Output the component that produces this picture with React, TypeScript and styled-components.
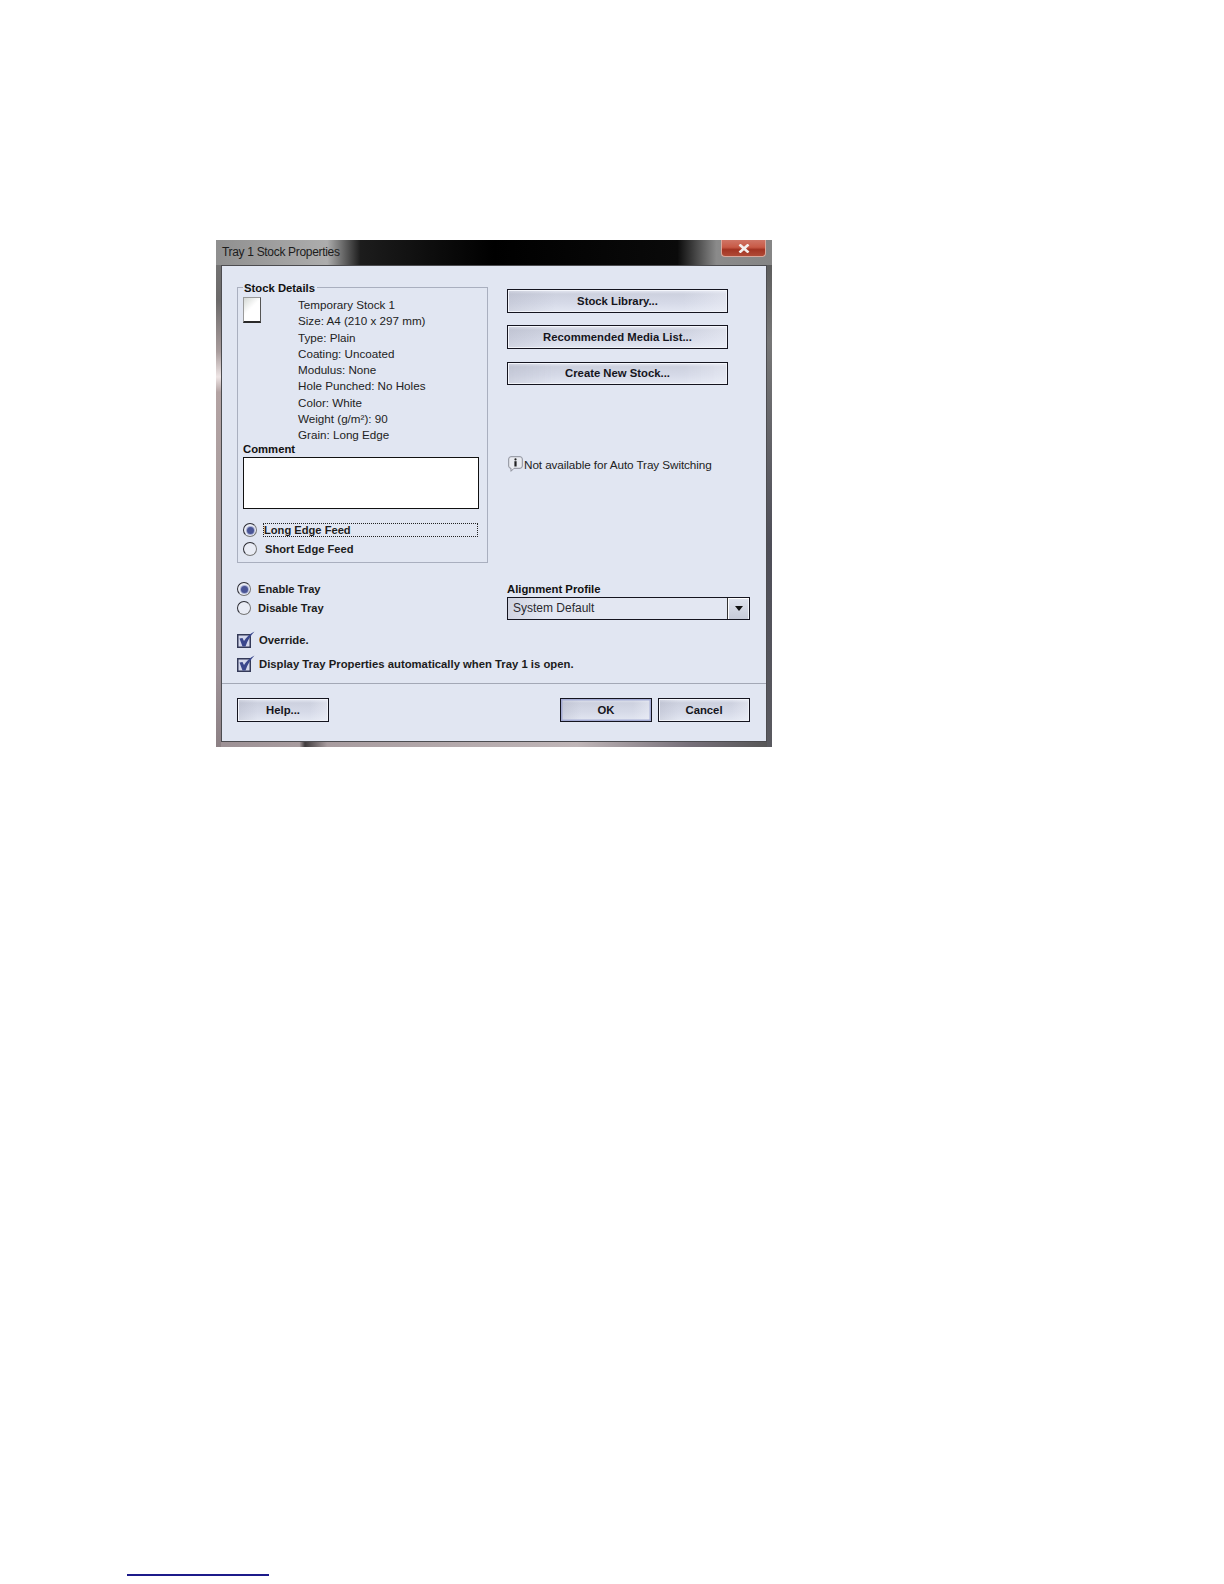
import { createGlobalStyle, styled } from "styled-components";

const GlobalStyle = createGlobalStyle`
  html, body {
    margin: 0;
    padding: 0;
    background: #fff;
  }
  * {
    box-sizing: border-box;
  }
`;

const Page = styled.div`
  width: 1224px;
  height: 1584px;
  padding: 240px 0 0 216px;
  font-family: "Liberation Sans", Arial, sans-serif;
  font-size: 11.65px;
  color: #1a1a1a;
`;

const Dialog = styled.div`
  position: relative;
  width: 556px;
  height: 507px;
  padding: 0 5px 5px;
  display: flex;
  flex-direction: column;
  background:
    linear-gradient(90deg, #8f8f8f 0, #adadad 20%, #1c1c1c 26%, #000 50%, #0a0a0a 83%, #8a8a8a 90%, #858585 100%) top / 100% 25px no-repeat,
    linear-gradient(180deg, #777 0, #6c6a6a 12%, #a89c9c 22%, #eee5e5 27%, #b3a3a3 30%, #a59a9c 60%, #9f9398 85%, #8c8084 100%) left / 5px 100% no-repeat,
    linear-gradient(180deg, #555 0, #777 20%, #4e4e58 60%, #5a5a60 100%) right / 5px 100% no-repeat,
    linear-gradient(90deg, #9c9094 0, #a89c9f 15%, #3f3b3d 16%, #a89c9f 20%, #c0b6b8 65%, #77707a 85%, #555 100%);
`;

const TitleBar = styled.div`
  height: 25px;
  flex: none;
  display: flex;
  align-items: center;
  padding: 0 0 2px 1px;
  font-size: 12px;
  letter-spacing: -0.32px;
  color: #1c1c1c;
`;

const CloseButton = styled.div`
  position: absolute;
  top: 0;
  right: 6px;
  width: 45px;
  height: 17px;
  display: flex;
  align-items: center;
  justify-content: center;
  border: 1px solid #d9a89c;
  border-top: none;
  border-radius: 0 0 4px 4px;
  background: linear-gradient(180deg, #cf7566 0, #c85a46 45%, #a23322 60%, #b04a36 100%);
`;

const Client = styled.div`
  width: 546px;
  height: 477px;
  flex: none;
  display: flex;
  flex-direction: column;
  border: 1px solid #4c4c50;
  background: #e1e6f2;
`;

const Body = styled.div`
  padding: 21px 15px 0;
`;

const TopRow = styled.div`
  display: flex;
  align-items: flex-start;
`;

const GroupBox = styled.div`
  position: relative;
  width: 251px;
  height: 276px;
  padding: 9px 0 0 5px;
  border: 1px solid #a9afbf;
`;

const GroupLegend = styled.span`
  position: absolute;
  top: -7px;
  left: 5px;
  padding: 0 2px 0 1px;
  background: #e1e6f2;
  font-weight: bold;
  font-size: 11.3px;
  line-height: 14px;
  color: #111;
`;

const DetailsRow = styled.div`
  display: flex;
  align-items: flex-start;
`;

const StockIcon = styled.div`
  width: 18px;
  height: 26px;
  flex: none;
  border: 1px solid #9a9a9a;
  border-right-color: #555;
  border-bottom: 2px solid #2a2a2a;
  background: linear-gradient(135deg, #d5d9d5 0, #fff 45%, #fff 100%);
`;

const DetailLines = styled.div`
  margin-left: 37px;
`;

const DetailLine = styled.div`
  height: 16.25px;
  line-height: 16px;
  white-space: nowrap;
  color: #222;
`;

const FieldLabel = styled.div`
  height: 15px;
  line-height: 14px;
  font-weight: bold;
  font-size: 11.3px;
  color: #111;
  white-space: nowrap;
`;

const CommentLabel = styled(FieldLabel)`
  margin-top: -1px;
`;

const CommentBox = styled.div`
  width: 236px;
  height: 52px;
  margin-bottom: 14px;
  border: 1.5px solid #111;
  background: #fff;
`;

const RadioList = styled.div`
  display: flex;
  flex-direction: column;
  gap: 5px;
`;

const RadioRow = styled.div<{ $gap: number }>`
  display: flex;
  align-items: center;
  gap: ${({ $gap }) => $gap}px;
  height: 14px;
  font-weight: bold;
  font-size: 11.15px;
  color: #1c1c1c;
  white-space: nowrap;
`;

const RadioDot = styled.span<{ $checked?: boolean }>`
  width: 14px;
  height: 14px;
  flex: none;
  display: flex;
  align-items: center;
  justify-content: center;
  border-radius: 50%;
  border: 1.5px solid #2c2c34;
  border-bottom-color: #777;
  border-right-color: #777;
  background: #e9ecf5;

  &::after {
    content: "";
    display: ${({ $checked }) => ($checked ? "block" : "none")};
    width: 7px;
    height: 7px;
    border-radius: 50%;
    background: #4a5596;
    box-shadow: 0 0 0 1px #a9b0d3;
  }
`;

const FocusLabel = styled.span`
  width: 215px;
  height: 14px;
  line-height: 12px;
  border: 1px dotted #222;
`;

const RightColumn = styled.div`
  width: 221px;
  margin-left: 19px;
  padding-top: 2px;
`;

const ActionStack = styled.div`
  display: flex;
  flex-direction: column;
  gap: 12.8px;
`;

const Button = styled.div<{ $width?: number; $default?: boolean }>`
  width: ${({ $width }) => ($width ? `${$width}px` : "100%")};
  height: 23.5px;
  display: flex;
  align-items: center;
  justify-content: center;
  border: 1px solid #14141f;
  border-bottom-width: 1.5px;
  box-shadow: ${({ $default }) =>
    $default
      ? "inset 0 0 0 1.5px #a4abd4"
      : "inset 1px 1px 0 #f3f5fb, inset -1px -1px 0 #f0f2f8"};
  background:
    linear-gradient(90deg, rgba(150, 153, 170, 0.22) 0, rgba(255, 255, 255, 0) 22%, rgba(255, 255, 255, 0) 80%, rgba(240, 242, 250, 0.5) 100%),
    linear-gradient(180deg, #e6e9f3 0, #cdd1df 18%, #d6dae8 60%, #e3e7f2 100%);
  font-weight: bold;
  font-size: 11.3px;
  color: #15151c;
`;

const NoteRow = styled.div`
  display: flex;
  align-items: center;
  gap: 1px;
  height: 16px;
  margin-top: 71px;
  padding-left: 1px;
  font-size: 11.75px;
  letter-spacing: -0.1px;
  color: #222;
  white-space: nowrap;
`;

const MiddleRow = styled.div`
  display: flex;
  align-items: flex-start;
  margin-top: 19px;
`;

const TrayColumn = styled.div`
  width: 270px;
`;

const ProfileColumn = styled.div`
  width: 243px;
`;

const Combo = styled.div`
  height: 23px;
  display: flex;
  align-items: stretch;
  border: 1px solid #14141f;
  background: linear-gradient(90deg, #d0d3e0 0, #e3e7f2 15%, #e3e7f2 100%);
`;

const ComboText = styled.span`
  flex: 1;
  padding-left: 5px;
  font-size: 12px;
  line-height: 21px;
  color: #2a2a30;
`;

const ComboArrow = styled.span`
  width: 22px;
  display: flex;
  align-items: center;
  justify-content: center;
  border-left: 1px solid #333;
  box-shadow: inset 1px 1px 0 #fff, inset -1px 0 0 #f0f2f8;
  background: linear-gradient(180deg, #dfe3ee 0, #c6cad8 100%);

  &::after {
    content: "";
    width: 0;
    height: 0;
    border-left: 4.5px solid transparent;
    border-right: 4.5px solid transparent;
    border-top: 5px solid #111;
  }
`;

const CheckList = styled.div`
  display: flex;
  flex-direction: column;
  gap: 8px;
  margin-top: 12px;
`;

const CheckRow = styled.div`
  display: flex;
  align-items: center;
  gap: 4px;
  height: 16px;
  font-weight: bold;
  font-size: 11.3px;
  color: #1c1c1c;
  white-space: nowrap;
`;

const Divider = styled.div`
  height: 1px;
  margin-top: 11px;
  background: #a3a8b6;
`;

const Footer = styled.div`
  display: flex;
  justify-content: space-between;
  padding: 14px 16px 0 15px;
`;

const FooterActions = styled.div`
  display: flex;
  gap: 6px;
`;

const FootnoteRule = styled.div`
  width: 142px;
  height: 2px;
  margin: 827px 0 0 -89px;
  background: #1c1a8a;
`;

const CheckIcon = () => (
  <svg width="18" height="18" viewBox="0 0 18 18" style={{ flex: "none", marginTop: -1 }}>
    <rect x="0.75" y="3.75" width="12.5" height="12.5" fill="#d3d7ec" stroke="#343a58" strokeWidth="1.5" />
    <path d="M2.5 7.5 L5.5 7 L7 10 C9 6.5 12.5 3 17.5 0.5 C14 4 10.5 9.5 8.5 15.5 L5.5 15.5 Z" fill="#39468c" />
  </svg>
);

const InfoIcon = () => (
  <svg width="15" height="16" viewBox="0 0 15 16" style={{ flex: "none" }}>
    <path
      d="M3 0.7 H12 A2.3 2.3 0 0 1 14.3 3 V10 A2.3 2.3 0 0 1 12 12.3 H6 L3 15.3 V12.3 A2.3 2.3 0 0 1 0.7 10 V3 A2.3 2.3 0 0 1 3 0.7 Z"
      fill="#e9ebf1"
      stroke="#8b8e98"
    />
    <circle cx="7.5" cy="3.4" r="1.1" fill="#222" />
    <rect x="6.4" y="5.2" width="2.2" height="5.3" fill="#222" />
  </svg>
);

const CloseGlyph = () => (
  <svg width="12" height="9" viewBox="0 0 12 9">
    <path d="M1.5 0.5 L10.5 8.5 M10.5 0.5 L1.5 8.5" stroke="#f4f0ee" strokeWidth="2.6" />
  </svg>
);

const details = [
  "Temporary Stock 1",
  "Size: A4 (210 x 297 mm)",
  "Type: Plain",
  "Coating: Uncoated",
  "Modulus: None",
  "Hole Punched: No Holes",
  "Color: White",
  "Weight (g/m²): 90",
  "Grain: Long Edge",
];

export default function App() {
  return (
    <Page>
      <GlobalStyle />
      <Dialog>
        <TitleBar>Tray 1 Stock Properties</TitleBar>
        <CloseButton>
          <CloseGlyph />
        </CloseButton>
        <Client>
          <Body>
            <TopRow>
              <GroupBox>
                <GroupLegend>Stock Details</GroupLegend>
                <DetailsRow>
                  <StockIcon />
                  <DetailLines>
                    {details.map((line) => (
                      <DetailLine key={line}>{line}</DetailLine>
                    ))}
                  </DetailLines>
                </DetailsRow>
                <CommentLabel>Comment</CommentLabel>
                <CommentBox />
                <RadioList>
                  <RadioRow $gap={6}>
                    <RadioDot $checked />
                    <FocusLabel>Long Edge Feed</FocusLabel>
                  </RadioRow>
                  <RadioRow $gap={8}>
                    <RadioDot />
                    Short Edge Feed
                  </RadioRow>
                </RadioList>
              </GroupBox>
              <RightColumn>
                <ActionStack>
                  <Button>Stock Library...</Button>
                  <Button>Recommended Media List...</Button>
                  <Button>Create New Stock...</Button>
                </ActionStack>
                <NoteRow>
                  <InfoIcon />
                  Not available for Auto Tray Switching
                </NoteRow>
              </RightColumn>
            </TopRow>
            <MiddleRow>
              <TrayColumn>
                <RadioList>
                  <RadioRow $gap={7}>
                    <RadioDot $checked />
                    Enable Tray
                  </RadioRow>
                  <RadioRow $gap={7}>
                    <RadioDot />
                    Disable Tray
                  </RadioRow>
                </RadioList>
              </TrayColumn>
              <ProfileColumn>
                <FieldLabel>Alignment Profile</FieldLabel>
                <Combo>
                  <ComboText>System Default</ComboText>
                  <ComboArrow />
                </Combo>
              </ProfileColumn>
            </MiddleRow>
            <CheckList>
              <CheckRow>
                <CheckIcon />
                Override.
              </CheckRow>
              <CheckRow>
                <CheckIcon />
                Display Tray Properties automatically when Tray 1 is open.
              </CheckRow>
            </CheckList>
          </Body>
          <Divider />
          <Footer>
            <Button $width={92}>Help...</Button>
            <FooterActions>
              <Button $width={92} $default>
                OK
              </Button>
              <Button $width={92}>Cancel</Button>
            </FooterActions>
          </Footer>
        </Client>
      </Dialog>
      <FootnoteRule />
    </Page>
  );
}
